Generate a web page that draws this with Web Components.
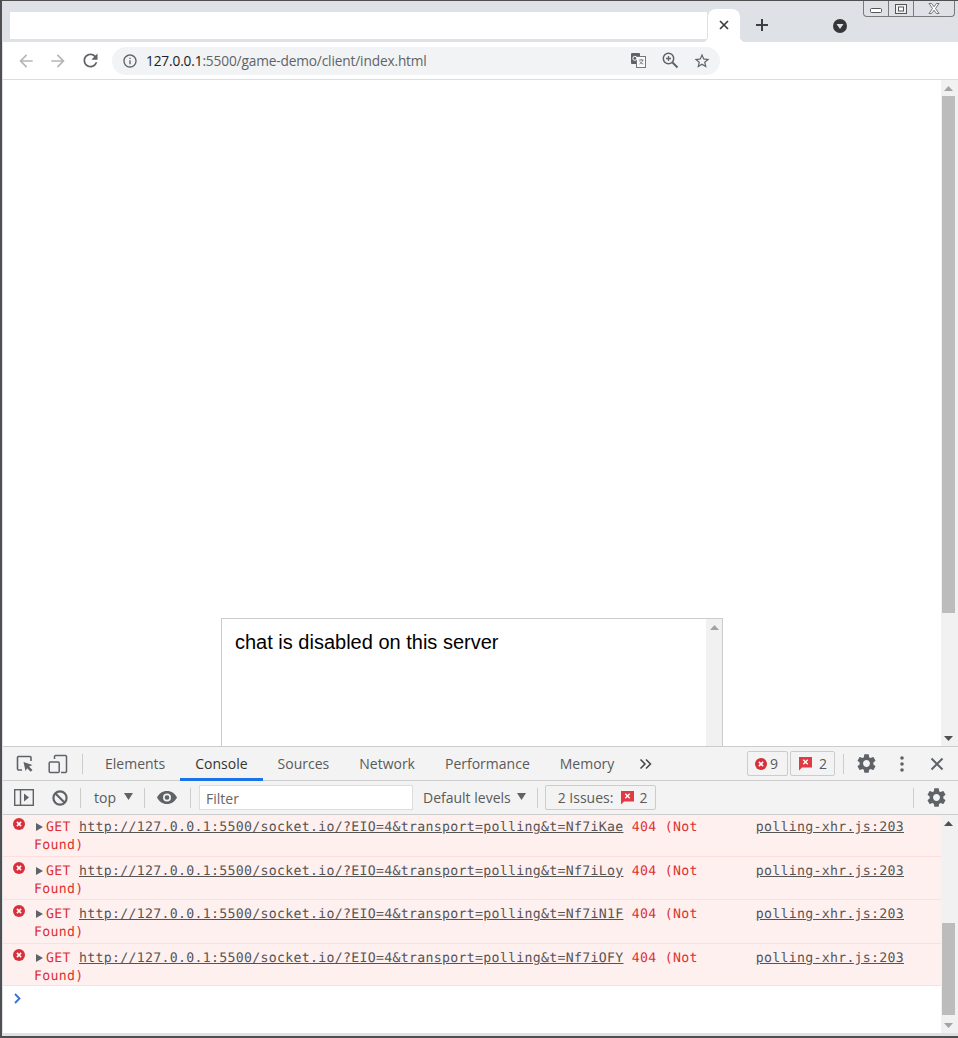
<!DOCTYPE html>
<html lang="en"><head><meta charset="utf-8"><title>game-demo</title>
<style>html,body{margin:0;padding:0;height:1038px;overflow:hidden;background:#fff}</style>
</head><body>
<browser-window>
  <tab-strip slot="top"></tab-strip>
  <nav-bar slot="top" url-host="127.0.0.1" url-rest=":5500/game-demo/client/index.html"></nav-bar>
  <page-view slot="page"><chat-box>chat is disabled on this server</chat-box></page-view>
  <dev-tools slot="tools">
    <console-row h="42" pt="4" link="Nf7iKae"></console-row>
    <console-row h="43" pt="6" link="Nf7iLoy"></console-row>
    <console-row h="44" pt="6" link="Nf7iN1F"></console-row>
    <console-row h="42" pt="6" link="Nf7iOFY"></console-row>
  </dev-tools>
</browser-window>
<script>
const SANS = `"Open Sans","Noto Sans",sans-serif`;
const P = {
  back:'M20 11H7.83l5.59-5.59L12 4l-8 8 8 8 1.41-1.41L7.83 13H20v-2z',
  fwd:'M12 4l-1.41 1.41L16.17 11H4v2h12.17l-5.58 5.59L12 20l8-8z',
  reload:'M17.65 6.35C16.2 4.9 14.21 4 12 4c-4.42 0-7.99 3.58-7.99 8s3.57 8 7.99 8c3.73 0 6.84-2.55 7.73-6h-2.08c-.82 2.33-3.04 4-5.65 4-3.31 0-6-2.69-6-6s2.69-6 6-6c1.66 0 3.14.69 4.22 1.78L13 11h7V4l-2.35 2.35z',
  info:'M11 7h2v2h-2zm0 4h2v6h-2zm1-9C6.48 2 2 6.48 2 12s4.48 10 10 10 10-4.48 10-10S17.52 2 12 2zm0 18c-4.41 0-8-3.59-8-8s3.59-8 8-8 8 3.59 8 8-3.59 8-8 8z',
  star:'M22 9.24l-7.19-.62L12 2 9.19 8.63 2 9.24l5.46 4.73L5.82 21 12 17.27 18.18 21l-1.63-7.03L22 9.24zM12 15.4l-3.76 2.27 1-4.28-3.32-2.88 4.38-.38L12 6.1l1.71 4.04 4.38.38-3.32 2.88 1 4.28L12 15.4z',
  gear:'M19.14 12.94c.04-.3.06-.61.06-.94 0-.32-.02-.64-.07-.94l2.03-1.58c.18-.14.23-.41.12-.61l-1.92-3.32c-.12-.22-.37-.29-.59-.22l-2.39.96c-.5-.38-1.03-.7-1.62-.94l-.36-2.54c-.04-.24-.24-.41-.48-.41h-3.84c-.24 0-.43.17-.47.41l-.36 2.54c-.59.24-1.13.57-1.62.94l-2.39-.96c-.22-.08-.47 0-.59.22L2.74 8.87c-.12.21-.08.47.12.61l2.03 1.58c-.05.3-.09.63-.09.94s.02.64.07.94l-2.03 1.58c-.18.14-.23.41-.12.61l1.92 3.32c.12.22.37.29.59.22l2.39-.96c.5.38 1.03.7 1.62.94l.36 2.54c.05.24.24.41.48.41h3.84c.24 0 .44-.17.47-.41l.36-2.54c.59-.24 1.13-.56 1.62-.94l2.39.96c.22.08.47 0 .59-.22l1.92-3.32c.12-.22.07-.47-.12-.61l-2.01-1.58zM12 15.6c-1.98 0-3.6-1.62-3.6-3.6s1.62-3.6 3.6-3.6 3.6 1.62 3.6 3.6-1.62 3.6-3.6 3.6z'
};
const ico=(d,s,c,ml=0)=>`<svg width="${s}" height="${s}" viewBox="0 0 24 24" style="flex:none;margin-left:${ml}px;display:block"><path fill="${c}" d="${d}"/></svg>`;
const errDot=(s,ml=0)=>`<svg width="${s}" height="${s}" viewBox="0 0 12 12" style="flex:none;margin-left:${ml}px;display:block"><circle cx="6" cy="6" r="6" fill="#d8303a"/><path d="M3.900 3.900l4.200 4.200M8.100 3.900L3.900 8.100" stroke="#fff" stroke-width="1.500"/></svg>`;
const issue=(ml=0)=>`<svg width="15" height="15" viewBox="0 0 15 15" style="flex:none;margin-left:${ml}px;display:block"><path fill="#e03a45" d="M1 1h13v10.500H4L1 14.500z"/><path d="M5.300 3.800l4.400 4.400M9.700 3.800L5.300 8.200" stroke="#fff" stroke-width="1.400"/></svg>`;
const sep=(ml,h=20)=>`<i style="flex:none;display:block;width:1px;height:${h}px;background:#ccc;margin-left:${ml}px"></i>`;
function def(name,html){
  customElements.define(name,class extends HTMLElement{
    constructor(){super();this.attachShadow({mode:'open'});}
    connectedCallback(){
      this.shadowRoot.innerHTML=typeof html==='function'?html(this):html;
    }
  });
}
def('browser-window',`<style>
:host{display:flex;flex-direction:column;height:1038px;box-sizing:border-box;border-top:1px solid #4f4f4f;border-left:2px solid #4f4f4f;border-bottom:2px solid #4f4f4f;background:#dee1e6;position:relative;width:958px;overflow:hidden}
.main{flex:1;min-height:0;display:flex;flex-direction:column;margin-left:1px;margin-bottom:3px;background:#fff}
::slotted([slot=page]){height:666px;flex:none}
::slotted([slot=tools]){flex:1;min-height:0}
</style><slot name="top"></slot><div class="main"><slot name="page"></slot><slot name="tools"></slot></div>`);

def('window-controls',`<style>
:host{position:absolute;top:0;right:3px;width:92px;height:16px;display:flex;box-sizing:border-box;border:1px solid #7a7a7a;border-top:0;border-radius:0 0 4px 4px;background:#dee1e6}
div{display:flex;align-items:center;justify-content:center;border-right:1px solid #7a7a7a;box-sizing:border-box}
div:last-child{border:0}
</style>
<div style="width:25px"><svg width="12" height="6" viewBox="0 0 12 6" style="margin-top:5px"><rect x=".5" y=".5" width="11" height="4" rx="1" fill="#fff" stroke="#555"/></svg></div>
<div style="width:25px"><svg width="12" height="10" viewBox="0 0 12 10"><rect x=".5" y=".5" width="11" height="9" fill="#eef0f2" stroke="#555"/><rect x="3.500" y="3" width="5" height="4" fill="#fff" stroke="#555"/></svg></div>
<div style="flex:1"><svg width="12" height="11" viewBox="0 0 12 11"><path d="M1 .5h2.500L6 3.800 8.500.5H11L7.500 5.500 11 10.500H8.500L6 7.200 3.500 10.500H1L4.500 5.500z" fill="#fff" stroke="#555" stroke-width=".8"/></svg></div>`);

def('tab-strip',`<style>
:host{display:flex;height:41px;flex:none;box-sizing:border-box;position:relative;background:#dee1e6;padding-left:8px}
.blank{width:697px;height:27px;margin-top:11px;background:#fff;flex:none}
.tab{position:relative;width:32px;height:33px;margin:8px 0 0 1px;background:#fff;border-radius:8px 8px 0 0;flex:none;display:flex;align-items:center;justify-content:center;box-sizing:border-box}
.tab::before,.tab::after{content:"";position:absolute;bottom:0;width:6px;height:6px}
.tab::before{left:-6px;background:radial-gradient(circle at 0 0,transparent 6px,#fff 6.500px)}
.tab::after{right:-6px;background:radial-gradient(circle at 100% 0,transparent 6px,#fff 6.500px)}
.plus{margin-left:15px;margin-top:17px;flex:none}
.menu{margin-left:64px;margin-top:18px;flex:none}
</style>
<div class="blank"></div>
<div class="tab"><svg width="10" height="10" viewBox="0 0 10 10" style="margin-bottom:1px"><path d="M1 1l8 8M9 1L1 9" stroke="#3c4043" stroke-width="1.700"/></svg></div>
<svg class="plus" width="14" height="14" viewBox="0 0 14 14"><path d="M7 1v12M1 7h12" stroke="#3c4043" stroke-width="2"/></svg>
<svg class="menu" width="14" height="14" viewBox="0 0 14 14"><circle cx="7" cy="7" r="7" fill="#35363a"/><path d="M3.500 5h7L7 10z" fill="#dee1e6"/></svg>
<window-controls></window-controls>`);

def('nav-bar',el=>`<style>
:host{display:flex;align-items:center;height:38px;flex:none;box-sizing:border-box;background:#fff;border-bottom:1px solid #dadce0;margin-left:1px;padding:0 0 0 13px;font:13.700px ${SANS};letter-spacing:-.15px}
.omni{display:flex;align-items:center;width:608px;height:28px;margin-left:11px;border-radius:14px;background:#f1f3f4;flex:none;padding-left:10px;box-sizing:border-box}
.url{margin-left:8px;color:#5f6368;white-space:nowrap;flex:1}
b{font-weight:400;color:#202124}
</style>
${ico(P.back,20,'#b5b7ba')}${ico(P.fwd,20,'#b5b7ba',12)}${ico(P.reload,21,'#5f6368',12)}
<div class="omni">${ico(P.info,16,'#5f6368')}<span class="url"><b>${el.getAttribute('url-host')}</b>${el.getAttribute('url-rest')}</span>
<svg width="15" height="15" viewBox="0 0 15 15" style="flex:none"><rect x="0" y="0" width="9" height="11" rx="1" fill="#5f6368"/><rect x="5.500" y="3.500" width="9" height="11" fill="#f8f9fa" stroke="#777"/><circle cx="3.800" cy="5.300" r="2" fill="none" stroke="#fff"/><path d="M8 7h4.500M10.200 6v1M11.800 7c-.4 2-1.700 3-3.300 4M8.800 8.500c.6 1.200 1.800 2 3.500 2.500" fill="none" stroke="#666" stroke-width=".8"/></svg>
<svg width="17" height="17" viewBox="0 0 17 17" style="flex:none;margin-left:16px"><circle cx="6.500" cy="6.500" r="5.200" fill="none" stroke="#5f6368" stroke-width="1.500"/><path d="M10.500 10.500L15.500 15.500" stroke="#5f6368" stroke-width="2"/><path d="M6.500 4v5M4 6.500h5" stroke="#5f6368" stroke-width="1.300"/></svg>
<span style="margin-left:14px;margin-right:9px;flex:none">${ico(P.star,18,'#5f6368')}</span></div>`);

def('v-scrollbar',el=>{
  const up=el.getAttribute('up')||'#a3a3a3',dn=el.getAttribute('down')||'#a3a3a3';
  return `<style>
:host{display:flex;flex-direction:column;width:17px;background:#f1f1f1;flex:none;box-sizing:border-box;align-items:center;height:100%}
.a{height:16px;flex:none;display:flex;align-items:center;justify-content:center;width:100%}
.sp{flex:${el.getAttribute('before')||'0'} 0 0;width:100%}
.t{flex:${el.getAttribute('size')||'1'} 0 0;width:13px;background:#bcbcbc;margin-right:3px}
.e{flex:${el.getAttribute('after')||'0'} 0 0}
</style>
<div class="a"><svg width="9" height="5" viewBox="0 0 9 5" style="margin-right:3px"><path d="M4.500 0L9 5H0z" fill="${up}"/></svg></div>
<div class="sp"></div><div class="t"></div><div class="e"></div>
<div class="a"><svg width="9" height="5" viewBox="0 0 9 5" style="margin-right:3px"><path d="M0 0h9L4.500 5z" fill="${dn}"/></svg></div>`;
});

def('page-view',`<style>
:host{display:flex;box-sizing:border-box;overflow:hidden;background:#fff}
.c{flex:1;padding:538px 0 0 218px;min-width:0;box-sizing:border-box}
</style><div class="c"><slot></slot></div><v-scrollbar size="517" before="0" after="117" up="#a3a3a3" down="#505050"></v-scrollbar>`);

def('chat-box',`<style>
:host{display:flex;width:502px;height:128px;box-sizing:border-box;border:1px solid #ccc;border-bottom:0;background:#fff}
.t{flex:1;padding:11px 0 0 13px;font:20px/25px "Liberation Sans",Arial,sans-serif;color:#000;white-space:nowrap}
.s{width:16px;background:#f1f1f1;flex:none;display:flex;justify-content:center;padding-top:6px;box-sizing:border-box}
</style><div class="t"><slot></slot></div><div class="s"><svg width="9" height="5" viewBox="0 0 9 5"><path d="M4.500 0L9 5H0z" fill="#a3a3a3"/></svg></div>`);

def('dt-tab',el=>`<style>
:host{display:flex;align-items:center;justify-content:center;padding:3px 15px 0;height:34px;box-sizing:border-box;color:${el.hasAttribute('active')?'#333':'#5a5a5a'};border-bottom:3px solid ${el.hasAttribute('active')?'#1a73e8':'transparent'};flex:none;white-space:nowrap}
</style><slot></slot>`);

def('dt-tabs',`<style>
:host{display:flex;align-items:center;height:34px;flex:none;box-sizing:border-box;background:#f3f3f3;border-bottom:1px solid #ccc;font:14px ${SANS}}
.box{display:flex;align-items:center;height:25px;box-sizing:border-box;border:1px solid #ccc;border-radius:2px;color:#5a5a5a;flex:none;padding-left:7px}
</style>
<svg width="20" height="20" viewBox="0 0 20 20" style="flex:none;margin-left:12px"><path d="M16 7V3.500a1 1 0 0 0-1-1H3.500a1 1 0 0 0-1 1V15a1 1 0 0 0 1 1H7" fill="none" stroke="#5f6368" stroke-width="1.600"/><path d="M8.500 8l9 3-3.500 1.500 3.500 3.500-1.800 1.800-3.500-3.500L10.500 17z" fill="#5f6368"/></svg>
<svg width="20" height="20" viewBox="0 0 20 20" style="flex:none;margin-left:13px"><path d="M6.500 5V2.500a1 1 0 0 1 1-1h10a1 1 0 0 1 1 1v15a1 1 0 0 1-1 1H13" fill="none" stroke="#5f6368" stroke-width="1.500"/><rect x="1.200" y="8" width="10" height="10.500" rx="1" fill="none" stroke="#5f6368" stroke-width="1.500"/></svg>
${sep(14)}
<span style="width:7px;flex:none"></span>
<dt-tab>Elements</dt-tab><dt-tab active>Console</dt-tab><dt-tab>Sources</dt-tab><dt-tab>Network</dt-tab><dt-tab>Performance</dt-tab><dt-tab>Memory</dt-tab>
<svg width="13" height="12" viewBox="0 0 13 12" style="flex:none;margin-left:10px"><path d="M1.500 1.500L6 6l-4.500 4.500M7 1.500L11.500 6 7 10.500" fill="none" stroke="#444" stroke-width="1.500"/></svg>
<span style="flex:1"></span>
<div class="box" style="width:41px">${errDot(12)}<span style="margin-left:3px">9</span></div>
<div class="box" style="width:45px;margin-left:2px">${issue()}<span style="margin-left:6px">2</span></div>
${sep(8)}
${ico(P.gear,23,'#5f6368',11)}
<svg width="4" height="18" viewBox="0 0 4 18" style="flex:none;margin-left:22px"><circle cx="2" cy="3" r="1.800" fill="#5f6368"/><circle cx="2" cy="9" r="1.800" fill="#5f6368"/><circle cx="2" cy="15" r="1.800" fill="#5f6368"/></svg>
<svg width="14" height="14" viewBox="0 0 14 14" style="flex:none;margin-left:26px;margin-right:14px"><path d="M1.500 1.500l11 11M12.500 1.500l-11 11" stroke="#5f6368" stroke-width="2"/></svg>`);

def('dt-toolbar',`<style>
:host{display:flex;align-items:center;height:34px;flex:none;box-sizing:border-box;background:#f3f3f3;border-bottom:1px solid #ccc;font:14px ${SANS};color:#5a5a5a}
.input{width:214px;height:25px;background:#fff;border:1px solid #ddd;box-sizing:border-box;margin-left:8px;padding-left:6px;line-height:25px;flex:none;color:#666}
.box{display:flex;align-items:center;width:111px;height:25px;box-sizing:border-box;border:1px solid #ccc;border-radius:2px;margin-left:7px;padding-left:12px;flex:none}
span{flex:none;white-space:nowrap}
</style>
<svg width="20" height="17" viewBox="0 0 20 17" style="flex:none;margin-left:11px"><rect x=".7" y=".7" width="18.600" height="15.600" fill="none" stroke="#5f6368" stroke-width="1.400"/><path d="M6.500 1v15" stroke="#5f6368" stroke-width="1.400"/><path d="M10 4.500l5 4-5 4z" fill="#5f6368"/></svg>
<svg width="16" height="16" viewBox="0 0 16 16" style="flex:none;margin-left:18px"><circle cx="8" cy="8" r="6.600" fill="none" stroke="#5f6368" stroke-width="2.200"/><path d="M3.500 3.500l9 9" stroke="#5f6368" stroke-width="2.200"/></svg>
${sep(12)}
<span style="margin-left:13px">top</span>
<svg width="9" height="7" viewBox="0 0 9 7" style="flex:none;margin-left:8px;margin-bottom:3px"><path d="M0 0h9L4.500 7z" fill="#5f6368"/></svg>
${sep(11)}
<svg width="20" height="13" viewBox="0 0 20 13" style="flex:none;margin-left:12px"><path fill="#5f6368" fill-rule="evenodd" d="M10 0C5.500 0 1.800 2.700 0 6.500 1.800 10.300 5.500 13 10 13s8.200-2.700 10-6.500C18.200 2.700 14.500 0 10 0zm0 10.500a4 4 0 1 1 0-8 4 4 0 0 1 0 8z"/><circle cx="10" cy="6.500" r="2.300" fill="#5f6368"/></svg>
${sep(13)}
<div class="input">Filter</div>
<span style="margin-left:10px">Default levels</span>
<svg width="9" height="7" viewBox="0 0 9 7" style="flex:none;margin-left:6px;margin-bottom:3px"><path d="M0 0h9L4.500 7z" fill="#5f6368"/></svg>
${sep(11)}
<div class="box"><span>2 Issues:</span>${issue(7)}<span style="margin-left:4px">2</span></div>
<span style="flex:1"></span>
${sep(0)}
${ico(P.gear,23,'#5f6368',11)}<span style="width:10px"></span>`);

def('console-row',el=>`<style>
:host{display:block;height:${el.getAttribute('h')}px;padding-top:${el.getAttribute('pt')}px;box-sizing:border-box;background:#fff0f0;border-bottom:1px solid #fdd;position:relative;font:13.200px/18px "DejaVu Sans Mono","Liberation Mono",monospace;text-rendering:geometricPrecision;letter-spacing:.31px;color:#dc3232}
.ic{position:absolute;left:10px;top:${el.getAttribute('pt')-1}px}
.m{padding:0 37px 0 31px}
.tri{display:inline-block;width:0;height:0;border-left:7px solid #5f6368;border-top:4px solid transparent;border-bottom:4px solid transparent;margin-right:3px;margin-left:2px}
a{color:#555;text-decoration:underline}
.s{float:right;margin-left:12px;letter-spacing:.29px}
</style><div class="ic">${errDot(12)}</div>
<div class="m"><a class="s">polling-xhr.js:203</a><span class="tri"></span><span>GET </span><a>http://127.0.0.1:5500/socket.io/?EIO=4&amp;transport=polling&amp;t=${el.getAttribute('link')}</a> <span>404 (Not </span><span>Found)</span></div>`);

def('dev-tools',`<style>
:host{display:flex;flex-direction:column;box-sizing:border-box;border-top:1px solid #ccc;background:#fff;min-height:0}
.body{flex:1;display:flex;min-height:0}
.log{flex:1;min-width:0;overflow:hidden}
.prompt{padding:7px 0 0 10px;height:24px}
</style>
<dt-tabs></dt-tabs><dt-toolbar></dt-toolbar>
<div class="body"><div class="log"><slot></slot>
<div class="prompt"><svg width="9" height="11" viewBox="0 0 9 11" style="display:block"><path d="M2 1l4.500 4.500L2 10" fill="none" stroke="#3a6fd0" stroke-width="1.800"/></svg></div></div>
<v-scrollbar size="92" before="92" after="2" up="#505050" down="#a3a3a3"></v-scrollbar></div>`);
</script>
</body></html>
